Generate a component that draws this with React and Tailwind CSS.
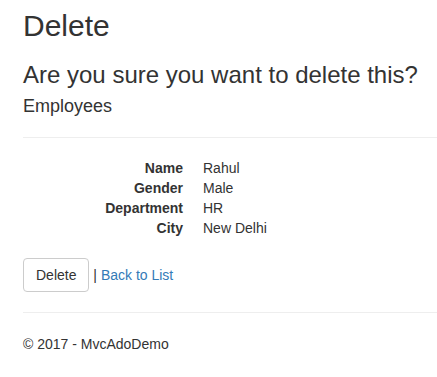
export default function App() {
  const rows = [
    ["Name", "Rahul"],
    ["Gender", "Male"],
    ["Department", "HR"],
    ["City", "New Delhi"],
  ];
  return (
    <div
      className="w-[437px] bg-white pl-[23px] pt-[9px] text-[14px] leading-[20px] text-[#333333]"
      style={{ fontFamily: '"Liberation Sans", Arial, sans-serif' }}
    >
      <h2 className="m-0 text-[30px] font-normal leading-[33px]">Delete</h2>
      <h3 className="mt-[20px] mb-0 text-[24px] font-normal leading-[26.4px]">
        Are you sure you want to delete this?
      </h3>
      <div>
        <h4 className="mt-[9px] mb-[10px] text-[18px] font-normal leading-[19.8px]">Employees</h4>
        <hr className="mt-[20px] mb-[20px] border-0 border-t border-[#eeeeee]" />
        <dl className="m-0 mb-[20px]">
          {rows.map(([k, v]) => (
            <div key={k} className="flex">
              <dt className="w-[160px] shrink-0 text-right font-bold">{k}</dt>
              <dd className="m-0 ml-[20px]">{v}</dd>
            </div>
          ))}
        </dl>
        <div className="flex items-center whitespace-pre">
          <button className="h-[34px] rounded-[4px] border border-[#cccccc] bg-white px-[12px] py-[6px] text-[14px] leading-[20px] text-[#333333]">
            Delete
          </button>
          <span className="text-[#333333]"> | </span>
          <a href="#" className="text-[#337ab7] no-underline">Back to List</a>
        </div>
      </div>
      <hr className="mt-[20px] mb-[21px] border-0 border-t border-[#eeeeee]" />
      <footer>
        <p className="m-0 pb-[24px]">© 2017 - MvcAdoDemo</p>
      </footer>
    </div>
  );
}
